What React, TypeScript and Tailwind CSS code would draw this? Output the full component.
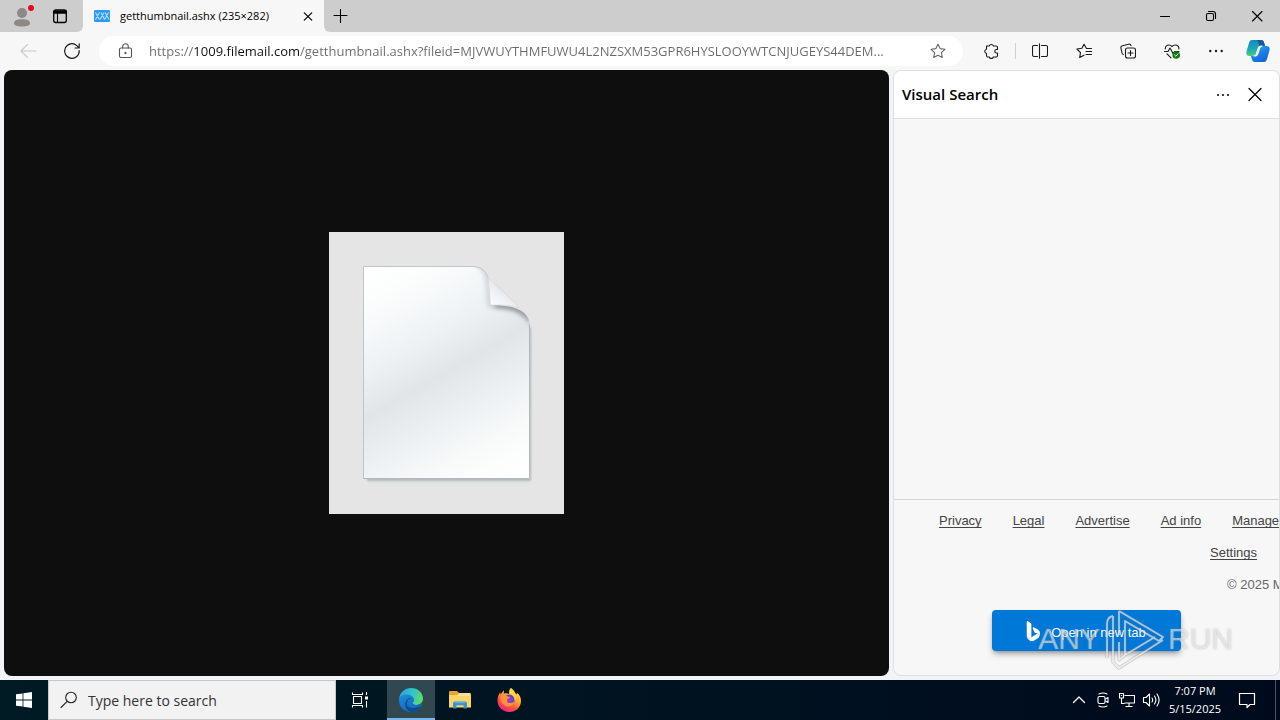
import type { ReactNode } from "react";
import { BsBing } from "react-icons/bs";

const PAGE_URL =
  "https://1009.filemail.com/getthumbnail.ashx?fileid=MJVWUYTHMFUWU4L2NZSXM53GPR6HYSLOOYWTCNJUGEYS44DEM...";

type IconProps = { children: ReactNode; size?: number; className?: string };

function Icon({ children, size = 16, className = "" }: IconProps) {
  return (
    <svg
      width={size}
      height={size}
      viewBox={`0 0 ${size} ${size}`}
      fill="none"
      stroke="currentColor"
      strokeWidth="1.1"
      strokeLinecap="round"
      strokeLinejoin="round"
      className={`shrink-0 ${className}`}
      aria-hidden="true"
    >
      {children}
    </svg>
  );
}

type IconButtonProps = { label: string; children: ReactNode; className?: string };

function IconButton({ label, children, className = "" }: IconButtonProps) {
  return (
    <button type="button" aria-label={label} className={`flex shrink-0 items-center justify-center ${className}`}>
      {children}
    </button>
  );
}

function TitleBar() {
  return (
    <header className="flex h-8 shrink-0 bg-[#f7f7f7] text-black">
      <div className="flex w-[83px] shrink-0 items-center rounded-br-md bg-[#cdcdcd] pl-3">
        <IconButton label="Profile" className="h-8 w-5">
          <svg width="24" height="24" viewBox="-1 0 24 24" className="shrink-0" aria-hidden="true">
            <circle cx="11" cy="9" r="5" fill="#8c8886" />
            <path d="M3 19.500c0-3 3-4.300 8-4.300s8 1.300 8 4.300c0 1.800-3.500 3-8 3s-8-1.200-8-3z" fill="#8c8886" />
            <circle cx="20" cy="4" r="3" fill="#e00b1c" />
          </svg>
        </IconButton>
        <IconButton label="Tab actions" className="ml-4 h-8 w-6">
          <Icon>
            <rect x="1.700" y="2" width="12.600" height="12.500" rx="2" strokeWidth="1.300" />
            <path d="M2 3.500h12M2 4.800h12" strokeWidth="2" />
            <path d="M5.500 5v9" />
          </Icon>
        </IconButton>
      </div>
      <div className="flex w-[241px] shrink-0 items-center pl-[11px] pr-2">
        <svg width="16" height="12" viewBox="0 0 16 12" className="shrink-0" aria-hidden="true">
          <rect width="16" height="12" rx="1" fill="#2f9bf0" />
          <path d="M1.500 2.500l4 7M5.500 2.500l-4 7M6 9.500l4-7M7 2.500l3.500 7M10.500 9.500l4-7M11 2.500l4 7" stroke="#b5dcfa" strokeWidth="1.100" fill="none" />
        </svg>
        <span className="ml-[10px] flex-1 truncate text-[11px]">getthumbnail.ashx (235×282)</span>
        <IconButton label="Close tab" className="h-4 w-4">
          <Icon>
            <path d="M4.300 4.800l7.400 7.400M11.700 4.800l-7.400 7.400" strokeWidth="1.200" />
          </Icon>
        </IconButton>
      </div>
      <div className="flex flex-1 items-center rounded-bl-md bg-[#cdcdcd] pl-2">
        <IconButton label="New tab" className="h-4 w-4">
          <Icon>
            <path d="M8.500 1.500v13M2 7.500h13" />
          </Icon>
        </IconButton>
        <div className="ml-auto flex">
          <IconButton label="Minimize" className="h-8 w-[46px]">
            <Icon><path d="M3.500 8.500h9" /></Icon>
          </IconButton>
          <IconButton label="Restore" className="h-8 w-[46px]">
            <Icon>
              <rect x="3.500" y="5.500" width="7" height="7" rx="1.500" />
              <path d="M5.500 3.500h4.500a2.500 2.500 0 0 1 2.500 2.500v4.500" />
            </Icon>
          </IconButton>
          <IconButton label="Close" className="h-8 w-[46px]">
            <Icon><path d="M3.500 3.500l9.500 9.500M13 3.500l-9.500 9.500" /></Icon>
          </IconButton>
        </div>
      </div>
    </header>
  );
}

function CopilotLogo() {
  return (
    <svg width="24" height="24" viewBox="0 0 24 24" aria-hidden="true">
      <defs>
        <linearGradient id="cpA" x1="0" y1="0" x2="0" y2="1">
          <stop offset="0" stopColor="#1b86c4" />
          <stop offset="0.550" stopColor="#19a9b8" />
          <stop offset="1" stopColor="#46d07c" />
        </linearGradient>
        <linearGradient id="cpB" x1="0" y1="0" x2="0.600" y2="1">
          <stop offset="0" stopColor="#35b9ee" />
          <stop offset="0.500" stopColor="#1c84e8" />
          <stop offset="1" stopColor="#1565d8" />
        </linearGradient>
      </defs>
      <path d="M6 1h9c2 0 2.700 1 3.200 3L19 7h-3.500c-2 0-3 1-3.600 3l-1.400 4.600C10 16.500 9 17 7.500 17H3.400C.7 17-.2 15 .6 12.200L3 4C3.600 2 4.400 1 6 1z" fill="url(#cpA)" />
      <path d="M15 1c2 0 2.700 1 3.200 3L19 7h-5.500L12 3c-.5-1.300-1-2-2-2z" fill="#155c9b" />
      <path d="M18 23H9c-2 0-2.700-1-3.200-3L5 17h3.500c2 0 3-1 3.600-3l1.400-4.600C14 7.500 15 7 16.500 7h4.100c2.700 0 3.600 2 2.800 4.800L21 20c-.6 2-1.400 3-3 3z" fill="url(#cpB)" />
      <path d="M8.500 17c2 0 3-1 3.600-3l1.400-4.600C14 7.500 15 7 16.500 7h-1c-2 0-3 1-3.600 3l-1.400 4.600C10 16.500 9 17 7.500 17z" fill="#f7f7f7" stroke="#f7f7f7" strokeWidth="1.200" />
    </svg>
  );
}

function Toolbar() {
  return (
    <nav className="flex h-[38px] shrink-0 items-center bg-[#f7f7f7] text-[#1b1b1b]">
      <IconButton label="Back" className="ml-4 h-7 w-6 text-[#c9c9c9]">
        <Icon size={18}><path d="M17 9H2M8.500 2.500L2 9l6.500 6.500" /></Icon>
      </IconButton>
      <IconButton label="Refresh" className="ml-5 h-7 w-6">
        <Icon size={18}>
          <path d="M16.200 8.500A7.300 7.300 0 1 1 13.800 3.600L16 5.800M16.200 1.800v4.200H12" strokeWidth="1.200" />
        </Icon>
      </IconButton>
      <div className="ml-[15px] flex h-[30px] min-w-0 flex-1 items-center rounded-full bg-white pl-[18px] pr-[17px]">
        <Icon className="text-[#555]">
          <rect x="2.500" y="5" width="12" height="9.500" rx="1.500" />
          <path d="M5.700 5V3.500a2.800 2.800 0 0 1 5.600 0V5" />
          <circle cx="8.500" cy="10" r="0.600" fill="currentColor" />
        </Icon>
        <input
          type="text"
          aria-label="Address"
          defaultValue={PAGE_URL}
          spellCheck={false}
          className="ml-4 h-6 min-w-0 flex-1 bg-[linear-gradient(to_right,#6b6b6b_45px,#111_45px,#111_151px,#6b6b6b_151px)] bg-clip-text text-[13px] text-transparent outline-none"
        />
        <IconButton label="Add to favorites" className="ml-[15px] h-6 w-4 text-[#666]">
          <Icon>
            <path d="M8 1.200l2.100 4.400 4.800.7-3.500 3.400.9 4.800L8 12.200l-4.300 2.300.9-4.800L1.100 6.300l4.800-.7z" />
          </Icon>
        </IconButton>
      </div>
      <div className="ml-3 flex shrink-0 items-center">
        <IconButton label="Extensions" className="h-8 w-8">
          <Icon>
            <path d="M3.500 3h2.700a2.200 2.200 0 0 1 4.200 0h2.600a1.500 1.500 0 0 1 1.500 1.500V6.500h-1a1.600 1.600 0 0 0 0 3.500h1v2.500a1.500 1.500 0 0 1-1.500 1.500h-2.600a2.200 2.200 0 0 1-4.200 0H5A1.500 1.500 0 0 1 3.500 12.500V10.500a2.200 2.200 0 0 1 0-4.300z" />
          </Icon>
        </IconButton>
        <span className="ml-2 h-4 w-px bg-[#d0d0d0]" />
        <IconButton label="Split screen" className="ml-2 h-8 w-8">
          <Icon>
            <path d="M5.500 2.500H2A1.500 1.500 0 0 0 .5 4v8A1.500 1.500 0 0 0 2 13.500h3.500M9.500 2.500H14A1.500 1.500 0 0 1 15.500 4v8a1.500 1.500 0 0 1-1.500 1.500H9.500M7.500.8v14.400" />
          </Icon>
        </IconButton>
        <IconButton label="Favorites" className="ml-3 h-8 w-8">
          <Icon>
            <path d="M15.500 5.500h-5L8 1.200 5.900 5.300.9 6l3.600 3.600-.8 5L8 12.200M10 8.500h5.500M10 11.500h5.500" />
          </Icon>
        </IconButton>
        <IconButton label="Collections" className="ml-3 h-8 w-8">
          <Icon>
            <rect x="5.500" y="5" width="10" height="10" rx="2" />
            <path d="M10.500 7.500v5M8 10h5M3.500 11.500A2 2 0 0 1 2 10L.9 5A2 2 0 0 1 2.400 2.700l6-1.500A2 2 0 0 1 11 2.600" />
          </Icon>
        </IconButton>
        <IconButton label="Browser essentials" className="ml-3 h-8 w-8">
          <Icon>
            <path d="M1.300 6C1 2.500 5 .4 8 3.500 11 .4 15.500 2.500 14.800 6M.5 8.500H4L6 5l3 5.500 1.600-2H15M3 10.800l4 4" />
            <circle cx="12.200" cy="12" r="3.800" fill="#107c10" stroke="none" />
            <path d="M10.600 12l1.200 1.200 2.300-2.300" stroke="#fff" strokeWidth="1" />
          </Icon>
        </IconButton>
        <IconButton label="Settings and more" className="ml-3 h-8 w-8">
          <Icon>
            <g fill="currentColor" stroke="none">
              <circle cx="2.300" cy="8" r="1.200" /><circle cx="8" cy="8" r="1.200" /><circle cx="13.700" cy="8" r="1.200" />
            </g>
          </Icon>
        </IconButton>
        <IconButton label="Copilot" className="ml-2 mr-1 h-8 w-9">
          <CopilotLogo />
        </IconButton>
      </div>
    </nav>
  );
}

function BlankDocument() {
  return (
    <svg width="235" height="282" viewBox="0 0 235 282" role="img" aria-label="Blank document" className="shrink-0">
      <defs>
        <linearGradient id="paper" gradientUnits="userSpaceOnUse" x1="55" y1="30" x2="180" y2="250">
          <stop offset="0" stopColor="#ffffff" />
          <stop offset="0.150" stopColor="#fafcfc" />
          <stop offset="0.350" stopColor="#edf1f3" />
          <stop offset="0.500" stopColor="#e2e5e8" />
          <stop offset="0.650" stopColor="#ebeff2" />
          <stop offset="0.820" stopColor="#f8faf9" />
          <stop offset="1" stopColor="#ffffff" />
        </linearGradient>
        <linearGradient id="fold" x1="0" y1="1" x2="0.600" y2="0.300">
          <stop offset="0" stopColor="#ffffff" />
          <stop offset="0.600" stopColor="#eef1f4" />
          <stop offset="1" stopColor="#dcdfe2" />
        </linearGradient>
        <filter id="soft" x="-20%" y="-30%" width="140%" height="160%">
          <feGaussianBlur stdDeviation="2.800" />
        </filter>
        <filter id="drop" x="-10%" y="-10%" width="120%" height="120%">
          <feGaussianBlur stdDeviation="1" />
        </filter>
        <clipPath id="page">
          <path d="M34 34H144c8 0 14 5 15 13l2 26c22 0 40 4 40 22V247H34z" />
        </clipPath>
      </defs>
      <rect width="235" height="282" fill="#e5e5e5" />
      <path d="M38 38H144l16 38 42 20V249H38z" fill="#b4b7b9" filter="url(#drop)" />
      <path d="M34 34H144c8 0 14 5 15 13l2 26c22 0 40 4 40 22V247H34z" fill="url(#paper)" />
      <g clipPath="url(#page)">
        <path d="M148 32q9 4 11 15l2 26c20 0 36 5 41 20" fill="none" stroke="#c4c8cc" strokeWidth="4" filter="url(#soft)" />
        <path d="M166 73c15 0 28 4 36 14" fill="none" stroke="#82888d" strokeWidth="5" filter="url(#soft)" />
      </g>
      <path d="M34.500 246V34.500H144c8 0 14 5 15.500 13" fill="none" stroke="#c2c5c7" strokeWidth="1" />
      <path d="M200.500 92V246.500H34" fill="none" stroke="#b5b8ba" strokeWidth="1" />
      <path d="M159 45c1 9 2 18 2.500 28 10 0 20 0 29 3C180 64 170 56 159 45z" fill="url(#fold)" stroke="#d0d4d7" strokeWidth="0.600" />
    </svg>
  );
}

const footerLinks = ["Privacy", "Legal", "Advertise", "Ad info", "Manage"];

function Watermark() {
  return (
    <div className="pointer-events-none absolute bottom-[5px] right-[46px] flex items-center gap-[3px] font-['Liberation_Sans_Narrow','Liberation_Sans',sans-serif] text-3xl text-white/50 [text-shadow:0_0_2px_#8888]">
      <span>ANY</span>
      <svg width="62" height="62" viewBox="2 0 62 62" fill="none" aria-hidden="true">
        <g stroke="#777" strokeOpacity="0.300" strokeWidth="3.500" strokeLinejoin="round">
          <path d="M18 3l44 26-4 4-34-20v34l30-18M18 3v24M12 8q-6 1-6 8v34M12 8v46l6 6 44-28M24 47l-6 5V34" />
        </g>
        <g stroke="#fff" strokeOpacity="0.600" strokeWidth="1.800" strokeLinejoin="round">
          <path d="M18 3l44 26-4 4-34-20v34l30-18M18 3v24M12 8q-6 1-6 8v34M12 8v46l6 6 44-28M24 47l-6 5V34" />
        </g>
      </svg>
      <span>RUN</span>
    </div>
  );
}

function VisualSearchPanel() {
  return (
    <aside className="relative flex w-[387px] shrink-0 flex-col overflow-hidden rounded-lg border border-[#dfdfdf] bg-[#f7f7f7]">
      <div className="flex h-12 shrink-0 items-center border-b border-[#e0e0e0] bg-white pl-2 pr-4 text-black">
        <h2 className="flex-1 text-[15px] font-semibold">Visual Search</h2>
        <IconButton label="More options" className="h-8 w-8">
          <Icon>
            <g fill="currentColor" stroke="none">
              <circle cx="3" cy="8" r="1" /><circle cx="8" cy="8" r="1" /><circle cx="13" cy="8" r="1" />
            </g>
          </Icon>
        </IconButton>
        <IconButton label="Close panel" className="-mr-2 h-8 w-8">
          <Icon><path d="M2 1.500l12 12M14 1.500l-12 12" strokeWidth="1.200" /></Icon>
        </IconButton>
      </div>
      <div className="flex-1" />
      <footer className="border-t border-[#d4d4d4] pt-[5px] font-['Liberation_Sans',Arial,sans-serif] text-[13px] text-[#444]">
        <ul className="flex h-8 items-center gap-[31px] whitespace-nowrap pl-[45px]">
          {footerLinks.map((name) => (
            <li key={name}>
              <a href="#" className="underline underline-offset-2">{name}</a>
            </li>
          ))}
        </ul>
        <div className="flex h-8 items-center justify-end pr-[22px]">
          <a href="#" className="underline underline-offset-2">Settings</a>
        </div>
        <p className="flex h-8 items-center justify-end whitespace-nowrap text-[#666]">
          <span className="w-[52px]">© 2025 M</span>
        </p>
        <button
          type="button"
          className="mx-auto mb-6 mt-[9px] flex h-[41px] w-[189px] items-center justify-center gap-2 rounded-sm bg-[#0078d7] pr-1 text-white shadow-md shadow-black/30"
        >
          <BsBing size={20} aria-hidden="true" />
          <span className="pt-1">Open in new tab</span>
        </button>
      </footer>
      <Watermark />
    </aside>
  );
}

function EdgeLogo() {
  return (
    <svg width="26" height="26" viewBox="0 0 26 26" aria-hidden="true">
      <defs>
        <linearGradient id="edTop" x1="0" y1="0.300" x2="1" y2="0.500">
          <stop offset="0" stopColor="#2aa5e0" />
          <stop offset="0.500" stopColor="#2fc3d0" />
          <stop offset="1" stopColor="#5ddc68" />
        </linearGradient>
        <linearGradient id="edLow" x1="0" y1="0" x2="0.700" y2="1">
          <stop offset="0" stopColor="#1b8fdd" />
          <stop offset="1" stopColor="#1263b8" />
        </linearGradient>
      </defs>
      <path d="M1 12C2 5 7 1 13 1c7 0 12 5 12 10.500 0 4-3 6.500-7 6.500-3 0-4-1.200-3.500-2.300C17 12 14 8.500 9.500 8.500 5 8.500 2 10 1 12z" fill="url(#edTop)" />
      <path d="M1 13.500C1 9.500 4.500 7.600 8.500 7.600c4.500 0 7.500 2.400 7.500 5.600 0 1.500-1 2-1.500 2.500-.5 1.100 1 2.300 3.500 2.300 2.500 0 4.500-.8 5.700-2C24 20 19 25 13 25 6 25 1 20 1 13.500z" fill="url(#edLow)" />
      <path d="M8.800 17c0-3.500 2-5.500 4.500-5.800-3-.8-6 2.500-6 6.300 0 4 3 7 7 7.400 4-.4 7-3 8.200-5.900C16 22.500 9 21.500 8.800 17z" fill="#114a8b" />
    </svg>
  );
}

function ExplorerLogo() {
  return (
    <svg width="24" height="20" viewBox="0 0 24 20" aria-hidden="true">
      <path d="M1 2q0-1 1-1h7l2 2h11q1 0 1 1v13H1z" fill="#e9a62c" />
      <path d="M1 5h22v12.500H1z" fill="#fbd667" />
      <path d="M11 3h11v3H9z" fill="#f6dfa0" />
      <path d="M5 18.500v-5q0-2 2-2h10q2 0 2 2v5h-3.500v-3.200h-7v3.200z" fill="#3a93cd" />
      <path d="M7 11.500h10v1.500H7z" fill="#64b5e3" />
    </svg>
  );
}

function FirefoxLogo() {
  return (
    <svg width="26" height="26" viewBox="0 0 26 26" aria-hidden="true">
      <defs>
        <linearGradient id="fx" x1="0.800" y1="0" x2="0.200" y2="1">
          <stop offset="0" stopColor="#fff04a" />
          <stop offset="0.400" stopColor="#ffa52d" />
          <stop offset="0.650" stopColor="#ff5440" />
          <stop offset="1" stopColor="#f01891" />
        </linearGradient>
        <radialGradient id="fxCore">
          <stop offset="0" stopColor="#a13be0" />
          <stop offset="1" stopColor="#5743c5" />
        </radialGradient>
      </defs>
      <path d="M15 1c3 2 3.500 3.500 4.500 5.500l1.500 1-.3-2C24 8 25 11 25 14c0 6.500-5.300 11-11.800 11S1.500 20 1.500 13.500c0-3.500 1-6 2.700-8.300l.5 2.300C6 5.500 7 4 8 3.500l-.2 3.200C10 6 12 6.500 13 7c0-2.500.5-4.500 2-6z" fill="url(#fx)" />
      <circle cx="13.200" cy="13" r="5.500" fill="url(#fxCore)" />
      <path d="M4.500 9c2-2 5-1.500 6.500.2l3 .8c-.3 1.500-2.500 1.600-3 2.500-.4 3 2 4 4 3.500 1.500-.4 2.200-1 3.200-.5-1 3-4 4.500-7 3.800C6.500 18.500 4 14 4.500 9z" fill="#ff9332" />
      <path d="M14.500 7.300C17.500 8 19 11 18.500 14c2.500-3 1.500-7-1-9.500C16.500 3.500 15.500 2.500 15 1c-1.500 1.500-2.500 4-.5 6.300z" fill="#ffda3b" />
    </svg>
  );
}

function Taskbar() {
  return (
    <footer className="flex h-10 shrink-0 bg-[linear-gradient(to_right,#001b23,#000a1d)] text-white">
      <IconButton label="Start" className="w-12">
        <svg width="16" height="16" viewBox="0 0 16 16" fill="#fff" aria-hidden="true">
          <path d="M0 2.300L6.600 1.400v6.200H0zM7.400 1.300L16 0v7.600H7.400zM0 8.400h6.600v6.200L0 13.700zM7.400 8.400H16V16l-8.600-1.300z" />
        </svg>
      </IconButton>
      <label className="flex w-72 items-center border border-[#c8c8c8] bg-[#f2f2f2] pl-[11px] text-[#222]">
        <Icon size={18}>
          <circle cx="11" cy="6.500" r="5.300" />
          <path d="M7.200 10.300L1 16.500" />
        </Icon>
        <input
          type="text"
          placeholder="Type here to search"
          aria-label="Type here to search"
          className="ml-[10px] w-full min-w-0 bg-transparent pt-px text-sm outline-none placeholder:text-[#333]"
        />
      </label>
      <div className="flex gap-px">
        <IconButton label="Task view" className="mr-[2px] w-12">
          <Icon size={18}>
            <path d="M1.500 1.500v2h10v-2M1.500 16.500v-2h10v2M2.500 5.500h8v7h-8zM15.500 1v3M15.500 10v6.500" strokeLinecap="butt" />
            <path d="M14 5.500h3v3h-3z" fill="currentColor" stroke="none" />
          </Icon>
        </IconButton>
        <IconButton label="Microsoft Edge" className="w-12 border-b-2 border-[#76b9ed] bg-[#324850] pt-[2px]">
          <EdgeLogo />
        </IconButton>
        <IconButton label="File Explorer" className="w-12"><ExplorerLogo /></IconButton>
        <IconButton label="Firefox" className="w-12"><FirefoxLogo /></IconButton>
      </div>
      <div className="ml-auto flex">
        <IconButton label="Show hidden icons" className="w-6">
          <Icon><path d="M2.500 10.500L8 5l5.500 5.500" strokeWidth="1.300" /></Icon>
        </IconButton>
        <IconButton label="Meet now" className="w-6">
          <Icon>
            <rect x="3" y="4.500" width="7" height="7" rx="1.500" />
            <path d="M10.500 7l2.500-1.500v5L10.500 9M4 2q4-2 8 0M4 14q4 2 8 0" />
          </Icon>
        </IconButton>
        <IconButton label="Network" className="w-6">
          <Icon>
            <path d="M5.500 3.500h10v7.500h-10M10 11v3.500M6.500 14.500h7M2.500 6v5.500h3M.5 1.500h4V6h-4zM2.500 3v1" strokeLinecap="butt" />
          </Icon>
        </IconButton>
        <IconButton label="Volume" className="w-6">
          <Icon size={18}>
            <path d="M1.500 6.500H4l3.500-3.500v12L4 11.500H1.500zM10 7q1.300 2 0 4M12.500 5q2.800 4 0 8M15 3q4.200 6 0 12" />
          </Icon>
        </IconButton>
        <button type="button" className="flex w-16 flex-col items-center justify-center whitespace-nowrap text-[11px] leading-[18px]">
          <time>7:07 PM</time>
          <time>5/15/2025</time>
        </button>
        <IconButton label="Notifications" className="w-10">
          <Icon size={18}><path d="M1.500 2.500h15v11H12l-3 3v-3H1.500z" strokeWidth="1.200" /></Icon>
        </IconButton>
        <span className="ml-2 mr-1 w-px bg-[#4d5563]" />
      </div>
    </footer>
  );
}

export default function App() {
  return (
    <div className="flex h-screen flex-col overflow-hidden bg-[#f2f3f6] font-['Open_Sans','Noto_Sans',sans-serif]">
      <TitleBar />
      <Toolbar />
      <div className="flex min-h-0 flex-1 gap-1 pb-1 pl-1">
        <main className="flex min-w-0 flex-1 items-center justify-center rounded-lg bg-[#0e0e0e]">
          <BlankDocument />
        </main>
        <VisualSearchPanel />
      </div>
      <Taskbar />
    </div>
  );
}
